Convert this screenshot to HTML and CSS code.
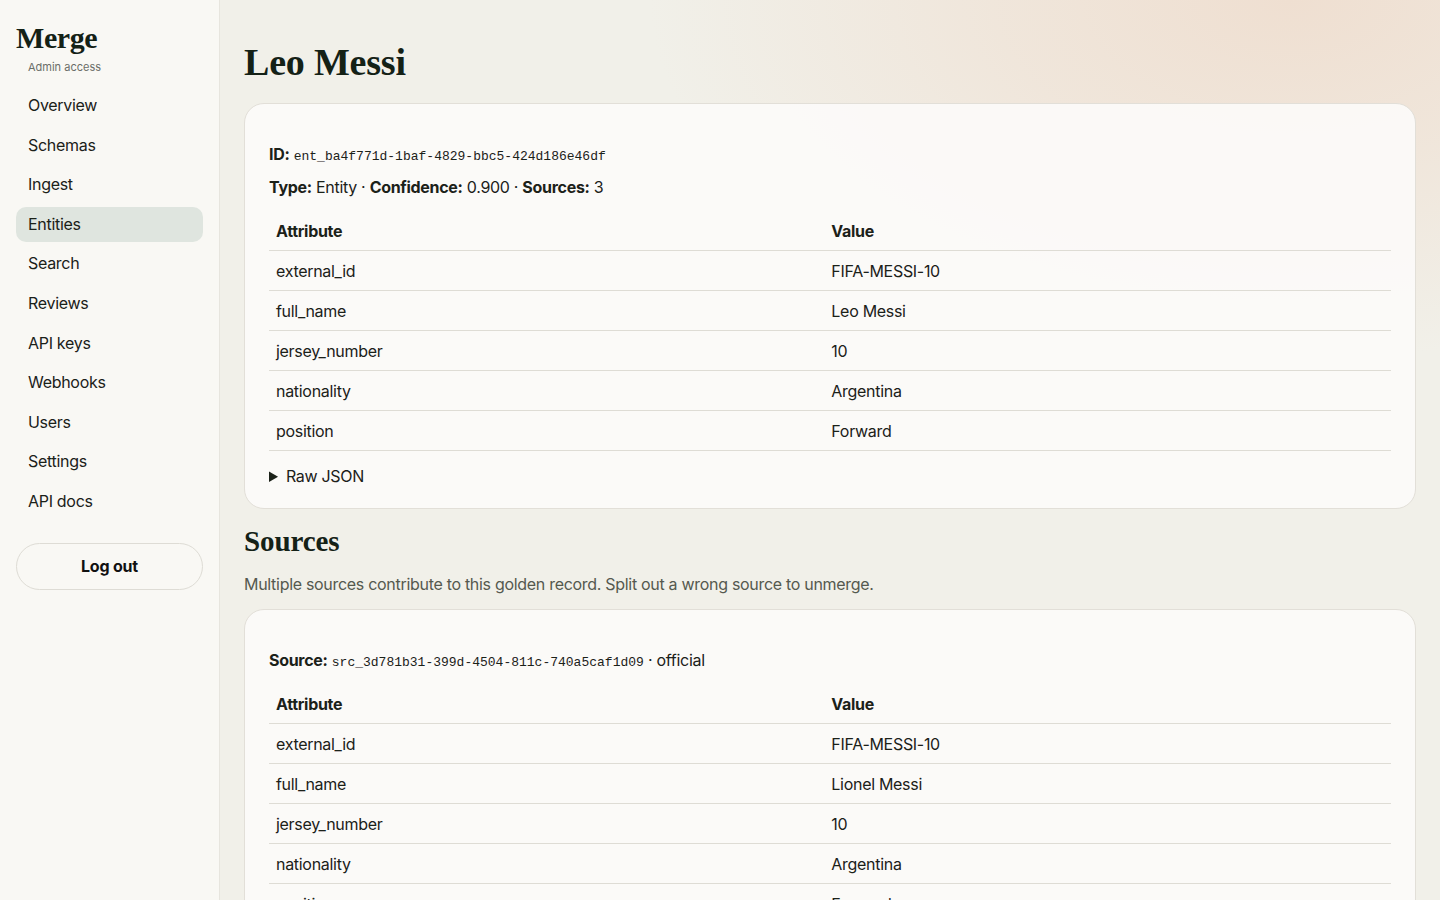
FILE: index.html
```html
<!DOCTYPE html>
<html lang="en">
<head>
    <meta charset="UTF-8">
    <meta name="viewport" content="width=device-width, initial-scale=1.0">
    <title>Leo Messi · Merge</title>
    <link rel="stylesheet" href="styles.css">
</head>
<body>

<div class="layout">
    <aside class="sidebar">
        <div class="brand">
            <div class="brand-name">Merge</div>
            <div class="brand-sub">Admin access</div>
        </div>
        <nav class="nav">
            <a href="#">Overview</a>
            <a href="#">Schemas</a>
            <a href="#">Ingest</a>
            <a href="#" class="active">Entities</a>
            <a href="#">Search</a>
            <a href="#">Reviews</a>
            <a href="#">API keys</a>
            <a href="#">Webhooks</a>
            <a href="#">Users</a>
            <a href="#">Settings</a>
            <a href="#">API docs</a>
        </nav>
        <button class="logout">Log out</button>
    </aside>

    <main class="main">
        <h1>Leo Messi</h1>

        <section class="card">
            <p class="meta"><b>ID:</b> <code>ent_ba4f771d-1baf-4829-bbc5-424d186e46df</code></p>
            <p class="meta"><b>Type:</b> Entity · <b>Confidence:</b> 0.900 · <b>Sources:</b> 3</p>
            <table class="attrs">
                <thead>
                    <tr><th>Attribute</th><th>Value</th></tr>
                </thead>
                <tbody>
                    <tr><td>external_id</td><td>FIFA-MESSI-10</td></tr>
                    <tr><td>full_name</td><td>Leo Messi</td></tr>
                    <tr><td>jersey_number</td><td>10</td></tr>
                    <tr><td>nationality</td><td>Argentina</td></tr>
                    <tr><td>position</td><td>Forward</td></tr>
                </tbody>
            </table>
            <details class="raw">
                <summary>Raw JSON</summary>
            </details>
        </section>

        <h2>Sources</h2>
        <p class="hint">Multiple sources contribute to this golden record. Split out a wrong source to unmerge.</p>

        <section class="card">
            <p class="meta"><b>Source:</b> <code>src_3d781b31-399d-4504-811c-740a5caf1d09</code> · official</p>
            <table class="attrs">
                <thead>
                    <tr><th>Attribute</th><th>Value</th></tr>
                </thead>
                <tbody>
                    <tr><td>external_id</td><td>FIFA-MESSI-10</td></tr>
                    <tr><td>full_name</td><td>Lionel Messi</td></tr>
                    <tr><td>jersey_number</td><td>10</td></tr>
                    <tr><td>nationality</td><td>Argentina</td></tr>
                    <tr><td>position</td><td>Forward</td></tr>
                </tbody>
            </table>
        </section>
    </main>
</div>

</body>
</html>
```

FILE: styles.css
```css
html, body {
    margin: 0;
    padding: 0;
}
body {
    font-family: Inter, "Noto Sans", sans-serif;
    font-size: 16px;
    letter-spacing: -0.3px;
    color: #1b2119;
    background-color: #f1f0e9;
    background-image: radial-gradient(ellipse 640px 360px at 1290px 0px, #efdfd1 0%, rgba(239, 223, 209, 0.6) 45%, rgba(241, 240, 233, 0) 100%);
    background-repeat: no-repeat;
    height: 900px;
    overflow: hidden;
}
.layout {
    display: flex;
    min-height: 900px;
}

/* sidebar */
.sidebar {
    width: 220px;
    flex-shrink: 0;
    background-color: #f9f8f4;
    border-right: 1px solid #e7e5de;
    padding: 23px 16px;
    box-sizing: border-box;
}
.brand {
    margin-bottom: 14px;
}
.brand-name {
    font-family: "Liberation Serif", "DejaVu Serif", serif;
    font-weight: bold;
    font-size: 30px;
    line-height: 30px;
    color: #142116;
    letter-spacing: -0.4px;
}
.brand-sub {
    font-size: 11px;
    letter-spacing: 0;
    color: #6b6e68;
    padding-left: 12px;
    margin-top: 7px;
}
.nav {
    display: flex;
    flex-direction: column;
    gap: 4px;
}
.nav a {
    display: block;
    padding: 8px 12px;
    line-height: 19.6px;
    border-radius: 10px;
    color: #1b2119;
    text-decoration: none;
}
.nav a.active {
    background-color: #dfe5df;
}
.logout {
    margin-top: 23px;
    width: 100%;
    height: 47px;
    border: 1px solid #dedcd5;
    border-radius: 24px;
    background: transparent;
    font-family: inherit;
    font-size: 16px;
    letter-spacing: -0.2px;
    font-weight: bold;
    color: #111;
    cursor: pointer;
}

/* main content */
.main {
    flex: 1;
    padding: 24px 24px 0;
    min-width: 0;
}
h1 {
    font-family: "Liberation Serif", "DejaVu Serif", serif;
    font-weight: bold;
    font-size: 38px;
    line-height: 40px;
    margin: 18px 0 21px;
    color: #142116;
    letter-spacing: -0.2px;
}
h2 {
    font-family: "Liberation Serif", "DejaVu Serif", serif;
    font-weight: bold;
    font-size: 29px;
    line-height: 30px;
    margin: 17px 0 18px;
    color: #142116;
    letter-spacing: -0.1px;
}
.hint {
    color: #55594f;
    line-height: 20px;
    margin: 0 0 15px;
}
.card {
    background-color: rgba(252, 251, 249, 0.9);
    border: 1px solid #e2dfd8;
    border-radius: 20px;
    padding: 40px 24px 20px;
}
.meta {
    margin: 0 0 13px;
    font-size: 16px;
    line-height: 20px;
}
.meta code {
    font-family: "Liberation Mono", "DejaVu Sans Mono", monospace;
    font-size: 13px;
    line-height: 1;
    letter-spacing: 0;
}
.attrs {
    width: 100%;
    border-collapse: collapse;
    table-layout: fixed;
    margin-top: 14px;
}
.attrs th:first-child {
    width: 48.25%;
}
.attrs th,
.attrs td {
    text-align: left;
    padding: 10px 7px 9px;
    line-height: 20px;
    border-bottom: 1px solid #dedcd5;
}
.attrs th {
    font-weight: bold;
}
.raw {
    margin-top: 13px;
}
.raw summary {
    cursor: pointer;
    line-height: 24px;
}
```
